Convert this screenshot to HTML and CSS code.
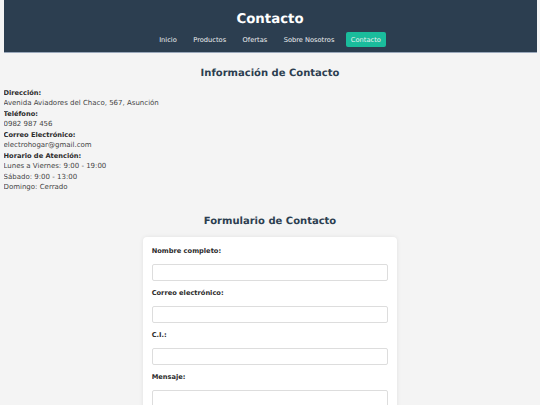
FILE: index.html
```html
<!DOCTYPE html>
<html lang="es">
<head>
    <meta charset="UTF-8">
    <meta name="viewport" content="width=device-width, initial-scale=1.0">
    <title>Contacto - ElectroHogar</title>
    <link rel="stylesheet" href="styles.css">
</head>
<body>
    <header class="site-header">
        <h1>Contacto</h1>
        <nav class="main-nav">
            <a href="#">Inicio</a>
            <a href="#">Productos</a>
            <a href="#">Ofertas</a>
            <a href="#">Sobre Nosotros</a>
            <a href="#" class="active">Contacto</a>
        </nav>
    </header>

    <section class="info">
        <h2>Información de Contacto</h2>
        <div class="info-list">
            <strong>Dirección:</strong><br>
            Avenida Aviadores del Chaco, 567, Asunción<br>
            <strong>Teléfono:</strong><br>
            0982 987 456<br>
            <strong>Correo Electrónico:</strong><br>
            electrohogar@gmail.com<br>
            <strong>Horario de Atención:</strong><br>
            Lunes a Viernes: 9:00 - 19:00<br>
            Sábado: 9:00 - 13:00<br>
            Domingo: Cerrado
        </div>
    </section>

    <section class="form-section">
        <h2>Formulario de Contacto</h2>
        <form class="contact-form">
            <label for="nombre">Nombre completo:</label>
            <input type="text" id="nombre">
            <label for="correo">Correo electrónico:</label>
            <input type="email" id="correo">
            <label for="ci">C.I.:</label>
            <input type="text" id="ci">
            <label for="mensaje">Mensaje:</label>
            <textarea id="mensaje" rows="5"></textarea>
        </form>
    </section>
</body>
</html>
```

FILE: styles.css
```css
body {
    margin: 0 3.5px;
    font-family: "DejaVu Sans", Verdana, sans-serif;
    font-size: 6.67px;
    line-height: 10.5px;
    color: #333;
    background-color: #f4f4f4;
    text-rendering: geometricPrecision;
}

.site-header {
    background-color: #2c3e50;
    color: #fff;
    text-align: center;
    padding: 8px 0 5px;
    border-bottom: 1px solid #9aa8bb;
}

.site-header h1 {
    margin: 0;
    font-size: 13.33px;
    line-height: 24px;
}

.main-nav {
    display: flex;
    justify-content: center;
    gap: 6.5px;
}

.main-nav a {
    color: #ecf0f1;
    text-decoration: none;
    padding: 2.5px 5px;
    line-height: 10px;
    border-radius: 2px;
}

.main-nav a:hover {
    background-color: #34495e;
}

.main-nav a.active {
    background-color: #1abc9c;
}

h2 {
    margin: 0;
    text-align: center;
    color: #2c3e50;
    font-size: 10px;
    line-height: 16px;
}

.info {
    padding-top: 13px;
}

.info h2 {
    margin-bottom: 5.5px;
}

.info-list {
    font-size: 7px;
    color: #444;
}

.info-list strong {
    font-size: 6.67px;
    color: #2c2c2c;
}

.form-section {
    padding-top: 21px;
}

.form-section h2 {
    margin-bottom: 7px;
}

.contact-form {
    width: 236.7px;
    margin: 0 auto;
    padding: 9.5px 8.33px 8.33px;
    background-color: #fff;
    border-radius: 4px;
    box-shadow: 0 0 4px rgba(0, 0, 0, 0.08);
}

.contact-form label {
    display: block;
    font-weight: bold;
    color: #2c2c2c;
    margin-bottom: 7.3px;
}

.contact-form input,
.contact-form textarea {
    display: block;
    width: 100%;
    box-sizing: border-box;
    height: 17.3px;
    margin: 0 0 7px;
    padding: 4px;
    border: 1px solid #ddd;
    border-radius: 2px;
    font-family: inherit;
    font-size: 6.67px;
    background: #fff;
}

.contact-form textarea {
    height: 60px;
    resize: vertical;
}
```
